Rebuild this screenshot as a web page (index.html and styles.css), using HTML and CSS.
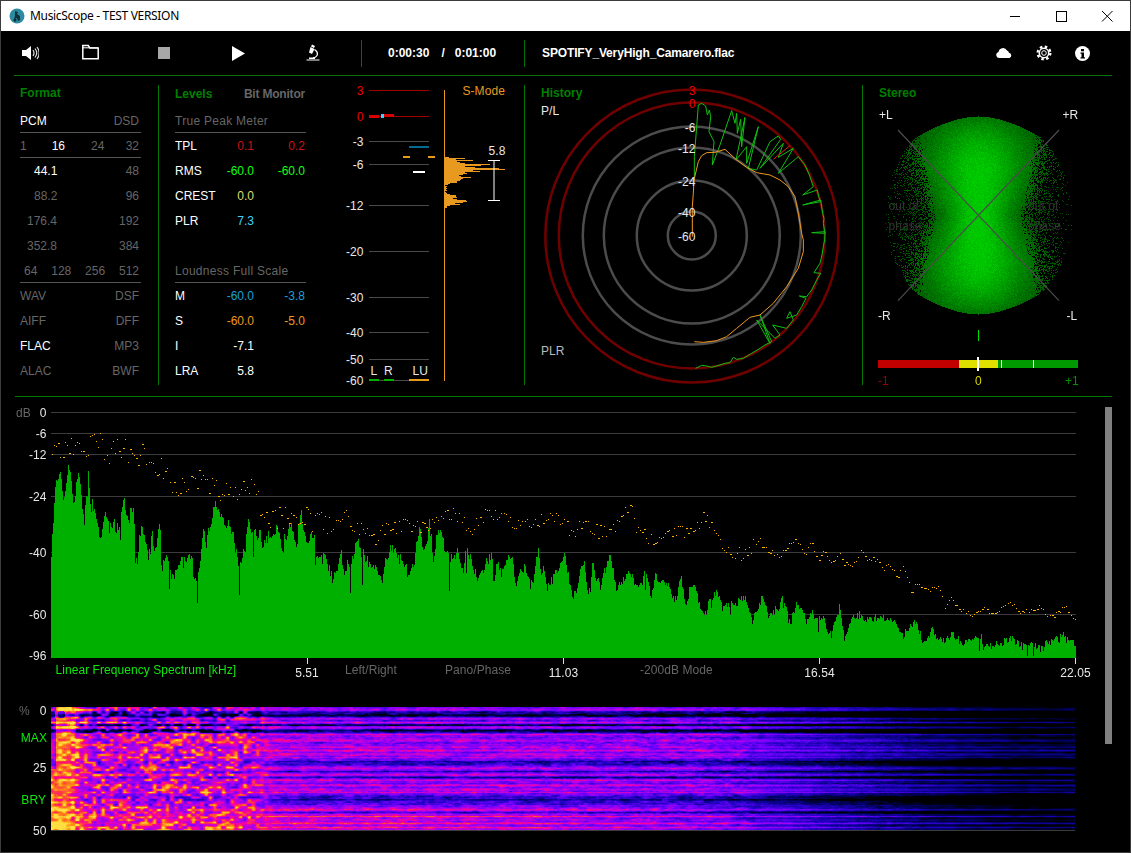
FILE: index.html
```html
<!DOCTYPE html>
<html lang="en">
<head>
<meta charset="utf-8">
<title>MusicScope - TEST VERSION</title>
<link rel="stylesheet" href="styles.css">
</head>
<body>
<div class="window">
  <header class="titlebar">
    <svg class="appicon" viewBox="0 0 16 16"><circle cx="8" cy="8" r="7.5" fill="#2c8ba0"/><path d="M6 3l3 1-1 2 3 2 0 4-2 1-1-3-3 1 1-3z" fill="#10303a"/><circle cx="6" cy="12" r="1.5" fill="#0c2a34"/></svg>
    <span class="apptitle">MusicScope - TEST VERSION</span>
    <div class="winbtns">
      <button class="winbtn" aria-label="Minimize"><svg viewBox="0 0 46 30"><path d="M18 15.5h10" stroke="#000"/></svg></button>
      <button class="winbtn" aria-label="Maximize"><svg viewBox="0 0 46 30"><rect x="18.5" y="10.5" width="10" height="10" fill="none" stroke="#000"/></svg></button>
      <button class="winbtn" aria-label="Close"><svg viewBox="0 0 46 30"><path d="M18 10l10.500 10.500M28.500 10l-10.500 10.500" stroke="#000" fill="none"/></svg></button>
    </div>
  </header>

  <nav class="toolbar">
    <svg class="ti ti-speaker" viewBox="0 0 17 16"><path d="M0 5h4l5-4v14l-5-4H0z" fill="#fff"/><path d="M11 5q2 3 0 6M13 3.500q3.500 4.500 0 9M15 2q4.500 6 0 12" stroke="#ddd" stroke-width="1.200" fill="none"/></svg>
    <svg class="ti ti-folder" viewBox="0 0 17 16"><path d="M.8 14.800V1.500h5.500l1.500 2.500h8.400v10.800z" fill="none" stroke="#fff" stroke-width="1.500"/><path d="M1 3.800h15" stroke="#fff"/></svg>
    <span class="ti-stop"></span>
    <svg class="ti ti-play" viewBox="0 0 13 15"><path d="M0 0l13 7.500L0 15z" fill="#fff"/></svg>
    <svg class="ti ti-micro" viewBox="0 0 14 17"><path d="M6 .500l3 1.500-1 2-3-1.500z" fill="#fff"/><path d="M4.500 3l4 2-2.500 5-3-1.500z" fill="#fff"/><path d="M8.500 5.500q4 2.500 2.500 6-1 2-4 2.500" stroke="#fff" stroke-width="1.300" fill="none"/><path d="M.5 15.500h13v1H.5zM3 13.500h6v1.500H3z" fill="#fff"/></svg>
    <i class="tbsep tbsep-a"></i>
    <span class="time time-a">0:00:30</span>
    <span class="time time-s">/</span>
    <span class="time time-b">0:01:00</span>
    <i class="tbsep tbsep-b"></i>
    <span class="time fname">SPOTIFY_VeryHigh_Camarero.flac</span>
    <svg class="ti ti-cloud" viewBox="0 0 16 10"><path d="M3 10a3 3 0 0 1-.5-5.900 4.500 4.500 0 0 1 8.500-1.500 3.500 3.500 0 0 1 2 2.200A2.700 2.700 0 0 1 13.500 10z" fill="#fff"/></svg>
    <svg class="ti ti-gear" viewBox="0 0 16 16"><circle cx="8" cy="8" r="6.300" fill="none" stroke="#fff" stroke-width="2.400" stroke-dasharray="2.500 2.450"/><circle cx="8" cy="8" r="4.700" fill="none" stroke="#fff" stroke-width="1.500"/><circle cx="8" cy="8" r="2.300" fill="none" stroke="#fff"/></svg>
    <svg class="ti ti-info" viewBox="0 0 15 15"><circle cx="7.500" cy="7.500" r="7.500" fill="#fff"/><path d="M6 3h3v2.200H6zM5.500 6.500H9v4.800h1v1.200H5.500v-1.200h1V7.700h-1z" fill="#000"/></svg>
  </nav>
  <hr class="rule rule-top">

  <section class="panels">
    <div class="panel p-format">
      <h2 class="ptitle">Format</h2>
      <div class="frow line"><span class="on">PCM</span><span>DSD</span></div>
      <div class="frow quad line"><span>1</span><span class="on f16">16</span><span class="f24">24</span><span class="f32">32</span></div>
      <div class="frow"><span class="on f44">44.1</span><span>48</span></div>
      <div class="frow"><span class="f44">88.2</span><span>96</span></div>
      <div class="frow"><span class="f176">176.4</span><span>192</span></div>
      <div class="frow"><span class="f176">352.8</span><span>384</span></div>
      <div class="frow line"><span class="f64">64</span><span>128</span><span>256</span><span>512</span></div>
      <div class="frow"><span>WAV</span><span>DSF</span></div>
      <div class="frow"><span>AIFF</span><span>DFF</span></div>
      <div class="frow"><span class="on">FLAC</span><span>MP3</span></div>
      <div class="frow"><span>ALAC</span><span>BWF</span></div>
    </div>

    <div class="panel p-levels">
      <div class="lhead"><h2 class="ptitle">Levels</h2><h2 class="ptitle dim">Bit Monitor</h2></div>
      <div class="lrow sub line">True Peak Meter</div>
      <div class="lrow"><span class="on">TPL</span><span class="c-red">0.1</span><span class="c-red">0.2</span></div>
      <div class="lrow"><span class="on">RMS</span><span class="c-green">-60.0</span><span class="c-green">-60.0</span></div>
      <div class="lrow"><span class="on">CREST</span><span class="c-yellow">0.0</span><span></span></div>
      <div class="lrow"><span class="on">PLR</span><span class="c-cyan">7.3</span><span></span></div>
      <div class="lrow"></div>
      <div class="lrow sub line">Loudness Full Scale</div>
      <div class="lrow"><span class="on">M</span><span class="c-blue">-60.0</span><span class="c-blue">-3.8</span></div>
      <div class="lrow"><span class="on">S</span><span class="c-orange">-60.0</span><span class="c-orange">-5.0</span></div>
      <div class="lrow"><span class="on">I</span><span class="on">-7.1</span><span></span></div>
      <div class="lrow"><span class="on">LRA</span><span class="on">5.8</span><span></span></div>
    </div>

    <div class="panel p-meter">
      <svg class="fill" viewBox="340 85 184 300">
        <g class="t-w" text-anchor="end">
          <text x="363.500" y="95" class="t-r">3</text>
          <text x="363.500" y="120.500" class="t-r">0</text>
          <text x="363.500" y="146">-3</text>
          <text x="363.500" y="169">-6</text>
          <text x="363.500" y="210">-12</text>
          <text x="363.500" y="256">-20</text>
          <text x="363.500" y="302">-30</text>
          <text x="363.500" y="337">-40</text>
          <text x="363.500" y="364">-50</text>
          <text x="363.500" y="385">-60</text>
        </g>
        <path class="l-red" d="M369 90.500h60M369 116.500h60"/>
        <path class="l-grey" d="M369 141.500h60M369 164.500h60M369 205.500h60M369 251.500h60M369 297.500h60M369 332.500h60M369 359.500h60M369 380.500h60"/>
        <rect x="369" y="115" width="10" height="3" fill="#d80000"/>
        <rect x="384" y="114" width="10" height="3" fill="#d80000"/>
        <rect x="381" y="114" width="3" height="4" fill="#40d0ff"/>
        <rect x="409" y="146" width="20" height="2" fill="#006c96"/>
        <rect x="403" y="156" width="7" height="2" fill="#e89a20"/>
        <rect x="428" y="156" width="7" height="2" fill="#e89a20"/>
        <rect x="413" y="171" width="12" height="2" fill="#fff"/>
        <rect x="369" y="379" width="10" height="2" fill="#00b000"/>
        <rect x="384" y="379" width="10" height="2" fill="#00b000"/>
        <rect x="409" y="379" width="20" height="2" fill="#e89a20"/>
        <g class="t-w">
          <text x="370.500" y="375">L</text>
          <text x="384" y="375">R</text>
          <text x="412.500" y="375">LU</text>
          <text x="488.500" y="155">5.8</text>
        </g>
        <text x="462.500" y="95" class="t-o">S-Mode</text>
        <rect x="444" y="90" width="1" height="291" fill="#e89a20"/>
        <path class="l-hist" d="M445 157.500h4M445 158.500h20M445 159.500h11M445 160.500h28M445 161.500h12M445 162.500h15M445 163.500h20M445 164.500h45M445 165.500h36M445 166.500h20M445 167.500h30M445 168.500h54M445 169.500h60M445 170.500h28M445 171.500h35M445 172.500h20M445 173.500h22M445 174.500h18M445 175.500h14M445 176.500h16M445 177.500h26M445 178.500h18M445 179.500h16M445 180.500h15M445 181.500h12M445 182.500h12M445 183.500h5M445 184.500h3M445 186.500h2M445 187.500h1M445 188.500h2M445 189.500h1M445 190.500h2M445 192.500h1M445 193.500h2M445 194.500h5M445 195.500h11M445 196.500h11M445 197.500h12M445 198.500h8M445 199.500h12M445 200.500h21M445 201.500h22M445 202.500h18M445 203.500h10M445 204.500h15M445 205.500h5M445 206.500h2M445 207.500h2"/>
        <path class="l-white" d="M488 160.500h12M488 200.500h12M494 160v41"/>
      </svg>
    </div>

    <div class="panel p-history">
      <h2 class="ptitle">History</h2>
      <svg class="fill over" viewBox="525 85 337 300">
        <g class="ring-r"><circle cx="691.800" cy="236" r="146.500"/><circle cx="691.800" cy="235.500" r="133"/></g>
        <g class="ring-g"><circle cx="691.800" cy="235.500" r="109"/><circle cx="691.800" cy="235.500" r="88"/><circle cx="691.800" cy="235.500" r="55"/><circle cx="691.800" cy="235.500" r="24"/></g>
        <g transform="translate(530 80) scale(.33333)">
          <polyline class="tr-g" points="493,300 493,230 497,180 505,75 515,70 527,78 532,105 538,90 542,110 537,155 547,175 552,185 547,255 570,195 605,92 615,130 620,100 622,160 632,118 635,200 645,112 618,240 650,200 650,250 685,140 655,265 680,270 720,185 745,168 752,178 690,265 760,190 745,232 790,205 745,280 805,230 825,255 838,285 850,320 818,345 862,330 866,350 872,365 818,375 872,360 878,400 882,415 880,430 885,460 845,458 885,455 884,480 880,500 876,525 870,550 852,578 872,580 860,600 855,610 845,630 830,650 808,648 828,655 815,680 800,705 770,715 780,695 790,720 770,745 728,735 750,765 735,775 680,720 720,790 690,705 725,785 705,795 690,805 665,820 640,835 620,838 610,832 600,848 585,850 570,855 545,862 530,858 515,856 497,865"/>
          <polyline class="tr-r" points="730,238 780,197"/>
          <polyline class="tr-o" points="487,470 487,380 490,340 492,300 505,245 515,227 530,218 555,217 585,208 600,222 620,240 650,262 680,278 720,285 750,300 775,320 795,350 805,400 815,460 820,480 820,515 805,565 770,620 730,670 690,705 660,712 620,745 590,770 560,782 520,787 493,785"/>
        </g>
        <g class="t-r" text-anchor="middle">
          <text x="692" y="95">3</text>
          <text x="692" y="108">0</text>
        </g>
        <g class="t-w" text-anchor="end">
          <text x="695.500" y="132">-6</text>
          <text x="695.500" y="153">-12</text>
          <text x="695.500" y="186">-24</text>
          <text x="695.500" y="217">-40</text>
          <text x="695.500" y="241">-60</text>
        </g>
        <text x="541" y="115" class="t-w">P/L</text>
        <text x="541" y="355" class="t-g">PLR</text>
      </svg>
    </div>

    <div class="panel p-stereo">
      <h2 class="ptitle">Stereo</h2>
      <canvas id="scope" class="scope" width="220" height="220"></canvas>
      <svg class="fill over" viewBox="863 85 249 300">
        <path class="l-x" d="M898 130L1059 300.700M1059 130L898 300.700"/>
        <g class="t-w">
          <text x="879" y="119">+L</text>
          <text x="1062.500" y="119">+R</text>
          <text x="878" y="320">-R</text>
          <text x="1066.500" y="320">-L</text>
        </g>
        <g class="t-d">
          <text x="888.500" y="210">out of</text>
          <text x="888.500" y="230">phase</text>
          <text x="1028" y="210">out of</text>
          <text x="1028" y="230">phase</text>
        </g>
        <rect x="978" y="330" width="1" height="11" fill="#00e000"/>
        <rect x="878" y="360" width="81" height="8" fill="#c00000"/>
        <rect x="959" y="360" width="39" height="8" fill="#e0e000"/>
        <rect x="998" y="360" width="80" height="8" fill="#009a00"/>
        <rect x="1001" y="360" width="1" height="8" fill="#fff"/>
        <rect x="1033" y="360" width="1" height="8" fill="#fff"/>
        <rect x="977" y="357" width="2" height="14" fill="#fff"/>
        <text x="878" y="385" class="t-dr">-1</text>
        <text x="975" y="385" class="t-y">0</text>
        <text x="1065" y="385" class="t-dg">+1</text>
      </svg>
    </div>
  </section>
  <hr class="rule rule-mid">

  <section class="lower">
    <div class="charts">
      <div class="chart chart-spec">
        <canvas id="spectrum" class="c-spec" width="1026" height="253"></canvas>
        <svg class="fill over" viewBox="1 397 1104 293">
          <g class="t-w" text-anchor="end">
            <text x="46.500" y="416.500">0</text>
            <text x="46.500" y="437.500">-6</text>
            <text x="46.500" y="458.500">-12</text>
            <text x="46.500" y="500.500">-24</text>
            <text x="46.500" y="556.500">-40</text>
            <text x="46.500" y="618.500">-60</text>
            <text x="46.500" y="660">-96</text>
          </g>
          <text x="16" y="416.500" class="t-m">dB</text>
          <text x="55.500" y="674" class="t-lg">Linear Frequency Spectrum [kHz]</text>
          <text x="345" y="674" class="t-m">Left/Right</text>
          <text x="445" y="674" class="t-m">Pano/Phase</text>
          <text x="640" y="674" class="t-m">-200dB Mode</text>
          <g class="t-w" text-anchor="middle">
            <text x="307" y="677">5.51</text>
            <text x="563.500" y="677">11.03</text>
            <text x="819.500" y="677">16.54</text>
            <text x="1075.500" y="677">22.05</text>
          </g>
        </svg>
      </div>
      <div class="chart chart-gram">
        <canvas id="gram" class="c-gram" width="1025" height="125"></canvas>
        <svg class="fill over" viewBox="1 690 1104 163">
          <text x="19" y="714.500" class="t-m">%</text>
          <g class="t-w" text-anchor="end">
            <text x="46.500" y="714.500">0</text>
            <text x="46.500" y="772">25</text>
            <text x="46.500" y="834.500">50</text>
          </g>
          <g class="t-lg" text-anchor="end">
            <text x="47" y="742">MAX</text>
            <text x="46" y="803.500">BRY</text>
          </g>
        </svg>
      </div>
    </div>
    <div class="scrollbar"></div>
  </section>
</div>
<script src="script.js"></script>
</body>
</html>
```
FILE: styles.css
```css
* { box-sizing: border-box; }
html, body { margin: 0; padding: 0; background: #000; }
body { width: 1131px; height: 853px; overflow: hidden; font: 12px/27px "Liberation Sans", Arial, sans-serif; color: #666; }
.window { width: 1131px; height: 853px; border: 1px solid #3c3c3c; background: #000; display: flex; flex-direction: column; overflow: hidden; }

.titlebar { flex: 0 0 30px; background: #fff; display: flex; align-items: center; padding-left: 8px; }
.appicon { width: 16px; height: 16px; flex: none; }
.apptitle { margin-left: 5px; font: 12px/30px "Noto Sans", sans-serif; letter-spacing: -.32px; color: #000; }
.winbtns { margin-left: auto; display: flex; }
.winbtn { width: 46px; height: 30px; padding: 0; border: 0; background: none; display: block; }
.winbtn svg { display: block; width: 46px; height: 30px; }

.toolbar { flex: 0 0 44px; display: flex; align-items: center; position: relative; color: #fff; }
.ti { flex: none; display: block; }
.ti-speaker { width: 17px; height: 16px; margin-left: 21px; }
.ti-folder { width: 17px; height: 16px; margin-left: 43px; margin-top: -2px; }
.ti-stop { width: 12px; height: 12px; margin-left: 59px; background: #a8a8a8; flex: none; }
.ti-play { width: 13px; height: 15px; margin-left: 62px; }
.ti-micro { width: 14px; height: 17px; margin-left: 61px; margin-top: -1px; }
.tbsep { flex: none; width: 1px; height: 27px; background: #007000; }
.tbsep-a { margin-left: 41px; }
.time { flex: none; font-weight: bold; color: #fff; }
.time-a { margin-left: 26px; }
.time-s { margin-left: 12px; }
.time-b { margin-left: 10px; }
.tbsep-b { margin-left: 28px; }
.fname { margin-left: 17px; letter-spacing: -.15px; }
.ti-cloud { width: 16px; height: 10px; margin-left: 262px; }
.ti-gear { width: 16px; height: 16px; margin-left: 24px; }
.ti-info { width: 15px; height: 15px; margin-left: 23px; }

.rule { margin: 0; border: 0; height: 1px; flex: none; }
.rule-top { margin-left: 13px; width: 1098px; background: #0a700a; }
.rule-mid { margin: 11px 0 0 14px; width: 1097px; background: #007800; }

.panels { flex: 0 0 300px; margin-top: 9px; display: flex; }
.panel { height: 300px; position: relative; flex: none; }
.p-format { width: 157px; padding-left: 19px; padding-right: 17px; }
.p-levels { width: 182px; border-left: 1px solid #007800; padding-left: 16px; padding-right: 34px; }
.p-meter { width: 184px; }
.p-history { width: 338px; border-left: 1px solid #007800; padding-left: 16px; }
.p-stereo { width: 250px; border-left: 1px solid #007800; padding-left: 16px; }

.ptitle { margin: 0; height: 23px; font: bold 12px/17px "Liberation Sans", Arial, sans-serif; color: #008000; }
.ptitle.dim { color: #666; letter-spacing: -.2px; }
.lhead { display: flex; justify-content: space-between; padding: 1px 1px 0 0; height: 23px; }

.frow { height: 25px; display: flex; justify-content: space-between; padding-right: 2px; }
.frow.quad { justify-content: flex-start; }
.line { border-bottom: 1px solid #555; }
.on { color: #fff; }
.f16 { margin-left: 25px; }
.f24 { margin-left: 26px; }
.f32 { margin-left: auto; }
.f44 { margin-left: 14px; margin-right: auto; }
.f176 { margin-left: 7px; margin-right: auto; }
.f64 { margin-left: 4px; }

.lrow { height: 25px; display: grid; grid-template-columns: 46px 33px 51px; }
.lrow span:nth-child(n+2) { text-align: right; }
.sub { display: block; letter-spacing: .28px; }
.c-red { color: #c81414; }
.c-green { color: #10ff10; }
.c-yellow { color: #dcdc70; }
.c-cyan { color: #40d0ff; }
.c-blue { color: #18a0d8; }
.c-orange { color: #f09820; }

.fill { display: block; width: 100%; height: 100%; font: 12px "Liberation Sans", Arial, sans-serif; letter-spacing: .06px; }
.over { position: absolute; left: 0; top: 0; }
.t-w { fill: #e8e8e8; }
.t-r { fill: #f00000; }
.t-o { fill: #e89a20; }
.t-g { fill: #bbb; }
.t-d { fill: #333; }
.t-m { fill: #666; }
.t-lg { fill: #10e810; }
.t-y { fill: #d8d800; }
.t-dr { fill: #a00000; }
.t-dg { fill: #009000; }
.l-red { stroke: #a00000; fill: none; }
.l-grey { stroke: #4a4a4a; fill: none; }
.l-hist { stroke: #e89a20; fill: none; }
.l-white { stroke: #fff; fill: none; }
.l-x { stroke: #4c4c4c; stroke-width: 1.200; fill: none; }
.ring-r circle { fill: none; stroke: #700000; stroke-width: 2.500; }
.ring-g circle { fill: none; stroke: #4c4c4c; stroke-width: 2.500; }
.tr-g { fill: none; stroke: #10c010; stroke-width: 3; }
.tr-r { fill: none; stroke: #e02020; stroke-width: 3; }
.tr-o { fill: none; stroke: #f09820; stroke-width: 3; }

.scope { position: absolute; left: 5px; top: 20px; }

.lower { flex: 1 1 auto; display: flex; }
.charts { width: 1104px; flex: none; display: flex; flex-direction: column; }
.chart { position: relative; flex: none; }
.chart-spec { height: 293px; padding: 14px 0 0 50px; }
.chart-gram { height: 163px; padding: 17px 0 0 50px; }
.c-spec, .c-gram { display: block; }
.scrollbar { width: 7px; height: 337px; margin-top: 10px; background: #808080; flex: none; }
```
FILE: script.js
```js
(function () {
  var seed = 12345;
  function rnd() {
    seed = (seed + 0x6D2B79F5) | 0;
    var t = Math.imul(seed ^ (seed >>> 15), 1 | seed);
    t = (t + Math.imul(t ^ (t >>> 7), 61 | t)) ^ t;
    return ((t ^ (t >>> 14)) >>> 0) / 4294967296;
  }
  function hash(a, b) {
    var h = Math.sin(a * 127.1 + b * 311.7) * 43758.5453;
    return h - Math.floor(h);
  }
  function vnoise(x, y) {
    var ix = Math.floor(x), iy = Math.floor(y), fx = x - ix, fy = y - iy;
    fx = fx * fx * (3 - 2 * fx); fy = fy * fy * (3 - 2 * fy);
    var a = hash(ix, iy), b = hash(ix + 1, iy), c = hash(ix, iy + 1), d = hash(ix + 1, iy + 1);
    return a + (b - a) * fx + (c - a) * fy + (a - b - c + d) * fx * fy;
  }
  function smooth(a, b, v) { var t = Math.max(0, Math.min(1, (v - a) / (b - a))); return t * t * (3 - 2 * t); }
  function conv(zoom, ox, oy) {
    return zoom.map(function (p) { return [p[0] / 3 + ox, p[1] / 3 + oy]; });
  }
  function interp(pts, x) {
    if (x <= pts[0][0]) return pts[0][1];
    for (var i = 1; i < pts.length; i++) {
      if (x <= pts[i][0]) {
        var a = pts[i - 1], b = pts[i];
        return a[1] + (b[1] - a[1]) * (x - a[0]) / (b[0] - a[0]);
      }
    }
    return pts[pts.length - 1][1];
  }

  var envPts = conv([[153,470],[157,385],[162,320],[170,250],[181,205],[190,300],[200,225],[212,205],[222,300],[237,225],[250,330],[254,385],[264,195],[272,310],[285,330],[297,400],[302,420],[318,330],[330,350],[355,390],[370,278],[385,380],[400,300],[412,500],[420,385],[435,390],[445,470],[458,405],[468,470],[478,345],[490,470],[510,500],[522,535],[533,460],[550,490],[570,455],[590,550],[612,380],[620,430],[643,292],[665,355],[695,370],[718,520],[745,390],[775,400],[790,430],[830,375],[850,440],[875,365],[890,445],[903,320],[915,420],[940,395],[955,480],[975,460],[1000,540],[1025,440],[1035,510],[1055,480],[1068,430],[1090,450],[1110,490],[1130,470],[1147,570],[1155,480],[1175,435]], 0, 400)
    .concat(conv([[0,480],[28,535],[60,385],[72,455],[88,368],[100,460],[118,398],[150,490],[175,445],[190,515],[198,442],[230,530],[275,465],[300,500],[338,475],[350,545],[375,490],[400,550],[415,460],[445,560],[470,500],[495,470],[520,595],[552,485],[565,570],[578,490],[600,555],[630,460],[650,560],[690,510],[710,570],[738,512],[755,580],[765,520],[785,530],[825,600],[845,535],[860,620],[875,535],[910,630],[950,565],[965,625],[990,605],[1030,585],[1060,655],[1082,585],[1110,650],[1130,610]], 400, 400))
    .concat(conv([[15,605],[30,680],[40,635],[62,610],[80,665],[100,640],[130,650],[150,700],[178,622],[195,700],[215,650],[250,645],[300,660],[345,655],[365,710],[410,660],[425,720],[460,695],[490,725],[515,695],[545,730],[600,705],[615,740],[660,730],[700,720],[785,745],[800,715],[860,710],[885,725]], 780, 400));

  var dotPts = conv([[153,230],[160,95],[170,125],[190,150],[215,130],[250,165],[275,105],[295,110],[320,160],[370,145],[400,165],[430,165],[470,190],[490,215],[510,240],[550,270],[600,245],[640,270],[680,265],[720,280],[750,260],[775,290],[780,330],[800,360],[840,355],[900,335],[930,360],[970,370],[1000,390],[1030,340],[1060,375],[1090,395],[1125,425],[1140,380]], 0, 400)
    .concat(conv([[0,375],[50,385],[100,360],[130,340],[170,350],[220,385],[260,340],[320,360],[380,370],[430,360],[470,340],[510,400],[560,370],[600,395],[640,380],[690,305],[710,390],[770,420],[830,390],[880,390],[920,345],[960,430],[1005,475],[1030,450],[1080,430],[1135,470]], 400, 400))
    .concat(conv([[45,412],[75,460],[95,428],[115,480],[130,450],[160,490],[175,458],[190,490],[225,490],[245,450],[260,480],[285,478],[310,505],[330,490],[350,530],[372,500],[395,580],[410,545],[450,570],[480,560],[495,625],[515,590],[535,628],[575,640],[610,625],[640,645],[690,600],[715,640],[775,620],[815,650],[855,615],[885,658]], 780, 400));

  /* spectrum: canvas origin is page (51, 411) */
  function drawSpectrum() {
    var c = document.getElementById('spectrum').getContext('2d');
    var ox = 51, oy = 411;
    c.fillStyle = '#3c3c3c';
    [412, 433, 454, 496, 552, 614].forEach(function (y) { c.fillRect(0, y - oy, 1025, 1); });
    c.fillStyle = '#00b000';
    for (var x = ox; x <= 1075; x++) {
      var y = interp(envPts, x + .5);
      var amp = x < 560 ? 20 : x < 800 ? 16 : 12;
      y += (vnoise(x / 1.15, 3.3) - .42) * amp + (vnoise(x / 4.3, 7.7) - .5) * amp * .5;
      if (rnd() < .035) y += 5 + rnd() * (x < 500 ? 28 : 12);
      y = Math.min(y, 656);
      c.fillRect(x - ox, Math.round(y) - oy, 1, 658 - Math.round(y));
    }
    c.fillStyle = '#ddd';
    [307, 563, 819, 1075].forEach(function (x) { c.fillRect(x - ox, 658 - oy, 1, 6); });
    c.fillStyle = '#ffb400';
    for (var dx = ox + 1; dx < 1075; dx += 2.1) {
      var amp2 = dx < 330 ? 24 : dx < 760 ? 15 : 5;
      var dy = interp(dotPts, dx) + (rnd() - .5) * amp2;
      c.fillRect(Math.round(dx) - ox, Math.round(dy) - oy, rnd() < .22 ? 2 : 1, 1);
    }
  }

  /* spectrogram */
  var stops = [[0,0,0,0],[.12,0,0,96],[.25,32,0,192],[.4,112,0,255],[.54,192,0,224],[.65,255,0,144],[.75,255,64,64],[.86,255,144,16],[1,255,224,64]];
  function cmap(t) {
    t = Math.max(0, Math.min(1, t));
    for (var i = 1; i < stops.length; i++) {
      if (t <= stops[i][0]) {
        var a = stops[i - 1], b = stops[i], f = (t - a[0]) / (b[0] - a[0]);
        return [a[1] + (b[1] - a[1]) * f, a[2] + (b[2] - a[2]) * f, a[3] + (b[3] - a[3]) * f];
      }
    }
    return [255, 224, 64];
  }
  function gauss(v, m, s) { var d = (v - m) / s; return Math.exp(-d * d); }
  function drawGram() {
    var cv = document.getElementById('gram'), c = cv.getContext('2d');
    var W = 1024, H = 123;
    c.fillStyle = '#3c3c3c'; c.fillRect(0, 123, 1024, 1);
    var im = c.createImageData(W, H);
    var lines = [2, 11, 15, 20, 27, 33, 40, 43, 47, 50, 61, 67, 73, 78, 82, 85, 102, 109, 116, 120];
    var dark = [[7.5, 3], [17.5, 1], [23.5, 2], [55, 3], [64, 1], [70, 1], [92, 4.500], [105, 1]];
    var row = [];
    for (var r = 0; r < H; r++) {
      var g = (rnd() - .5) * .1;
      lines.forEach(function (m) { g += .17 * gauss(r, m, 1); });
      dark.forEach(function (d) { g -= (d[0] < 26 ? .4 : .22) * gauss(r, d[0], d[1]); });
      row.push(g);
    }
    for (var y = 0; y < H; y++) {
      for (var x = 0; x < W; x++) {
        var px = x + 51, f;
        /* left strip fades into the pink body, body fades into purple */
        f = .82 - .27 * smooth(66, 92, px);
        f -= .11 * smooth(235, 295, px);
        if (px > 295) f -= (Math.min(px, 700) - 295) * .00012;
        if (px > 700) f -= (Math.min(px, 920) - 700) * .00125;
        if (px > 920) f -= (px - 920) * .00085;
        f = Math.max(f, .03);
        if (px < 56 && y < 62) f = .5;
        if (y < 26 && px >= 76) f -= px < 262 ? .1 : .02;
        f += .09 * smooth(97, 101, y) * (1 - smooth(400, 900, px));
        if (px < 80) {
          var dist = Math.sqrt((px - 61) * (px - 61) + (y - 7) * (y - 7));
          if (dist < 4) f = .46; else if (dist < 7) f = .84;
        }
        var n1 = vnoise(x / 4.3, y / 2.5) - .5;
        n1 = (n1 > .08 ? n1 * 1.6 : n1) * .5 * (px < 70 ? .6 : 1);
        var n2 = (vnoise(x / 9, y / 2.2) - .5) * .18 + (vnoise(x / 3, y / 1.2) - .5) * .14;
        var n3 = (vnoise(x / 9, y / 1.6) - .5) * .08 + (vnoise(x / 2.5, y / 1.1) - .5) * .08 * (1 - smooth(850, 1000, px));
        var m1 = smooth(240, 285, px), m2 = smooth(740, 790, px);
        var n = n1 * (1 - m1) + n2 * m1 * (1 - m2) + n3 * m2;
        n += (hash(x, y) - .5) * .05 * (1 - smooth(900, 1000, px));
        var rg = row[y] * ((y < 26 ? .9 : .3) * (1 - m1) + .85 * m1);
        var col = cmap(f + n + rg);
        var o = (y * W + x) * 4;
        im.data[o] = col[0]; im.data[o + 1] = col[1]; im.data[o + 2] = col[2]; im.data[o + 3] = 255;
      }
    }
    c.putImageData(im, 0, 0);
  }

  /* stereo goniometer: canvas page origin (868, 105), centre (978, 215) */
  function drawScope() {
    var cv = document.getElementById('scope'), c = cv.getContext('2d');
    var im = c.createImageData(220, 220);
    for (var y = 0; y < 220; y++) {
      for (var x = 0; x < 220; x++) {
        var u = Math.abs(x - 110), v = Math.abs(y - 110);
        var top = 99 - 21 * Math.pow(u / 62, 1.8);
        if (v > top) continue;
        var oval = (u / 94) * (u / 94) + (v / 104) * (v / 104);
        if (oval > 1) continue;
        var w = 34 + Math.min(v, 50) * .32;
        var d = Math.exp(-(u * u) / (w * w));
        var edge = Math.max(0, (v - 38) / 61);
        var bright = d * (1 - edge * edge * .7);
        var solid = 42 + Math.min(v, 75) * .2;
        var p = u < solid ? 1 : Math.exp(-(u - solid) / 17) * .9;
        if (rnd() > p) continue;
        var gv = 76 + 126 * bright + (rnd() - .5) * 30;
        var o = (y * 220 + x) * 4;
        im.data[o + 1] = Math.max(70, Math.min(205, gv));
        im.data[o + 3] = 255;
      }
    }
    c.putImageData(im, 0, 0);
  }

  drawSpectrum();
  drawGram();
  drawScope();
})();
```
